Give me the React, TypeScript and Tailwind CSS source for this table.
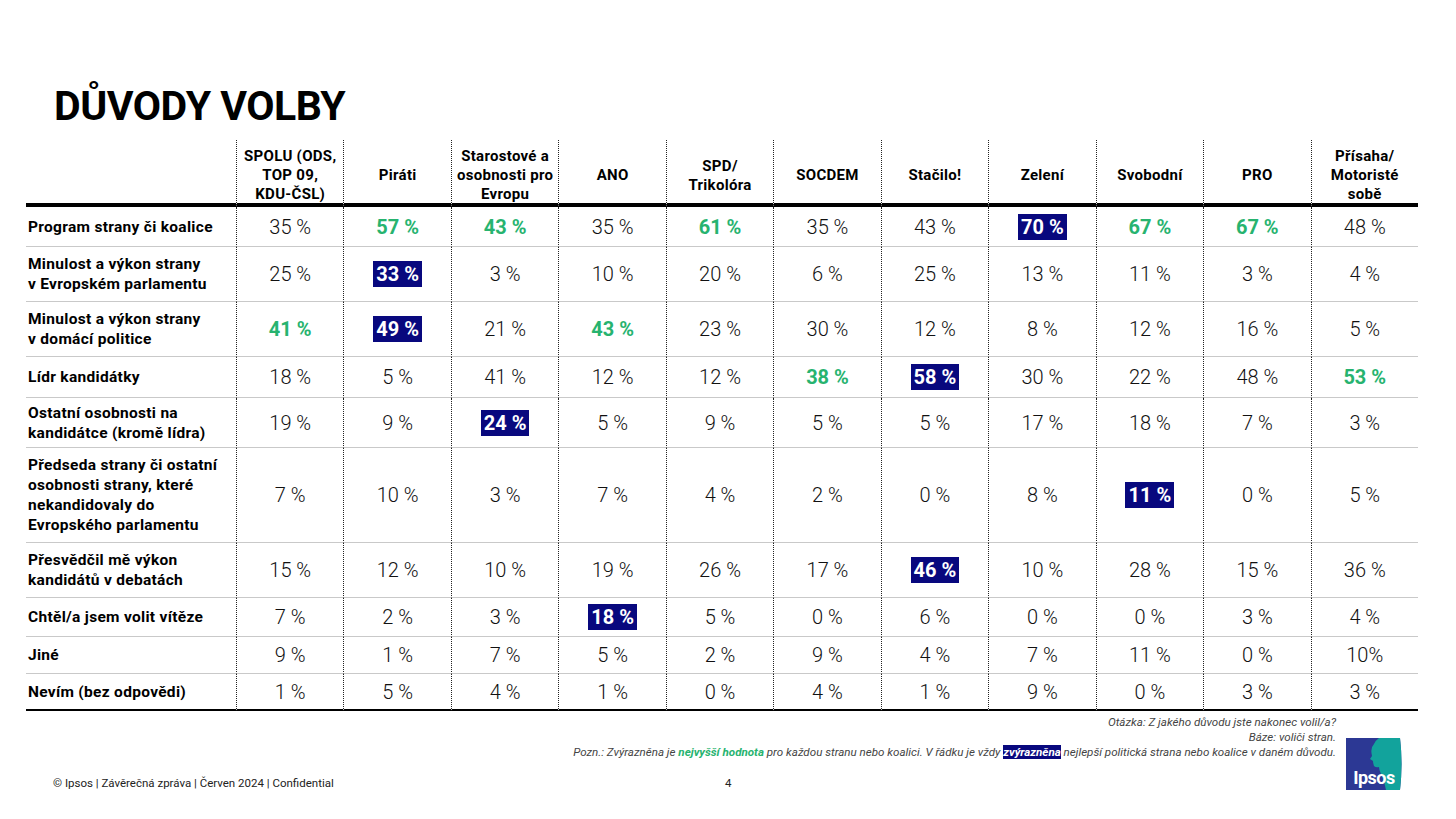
import React from 'react';

const font = { fontFamily: 'Roboto, "Noto Sans", sans-serif' };

const parties = [
  ['SPOLU (ODS,', 'TOP 09,', 'KDU-ČSL)'],
  ['Piráti'],
  ['Starostové a', 'osobnosti pro', 'Evropu'],
  ['ANO'],
  ['SPD/', 'Trikolóra'],
  ['SOCDEM'],
  ['Stačilo!'],
  ['Zelení'],
  ['Svobodní'],
  ['PRO'],
  ['Přísaha/', 'Motoristé', 'sobě'],
];

// g = nejvyšší hodnota pro stranu, b = nejlepší strana v řádku
const rows: { label: string[]; h: string; values: string[] }[] = [
  { label: ['Program strany či koalice'], h: 'h-[40px]', values: ['35 %', '57 %g', '43 %g', '35 %', '61 %g', '35 %', '43 %', '70 %b', '67 %g', '67 %g', '48 %'] },
  { label: ['Minulost a výkon strany', 'v Evropském parlamentu'], h: 'h-[55px]', values: ['25 %', '33 %b', '3 %', '10 %', '20 %', '6 %', '25 %', '13 %', '11 %', '3 %', '4 %'] },
  { label: ['Minulost a výkon strany', 'v domácí politice'], h: 'h-[55px]', values: ['41 %g', '49 %b', '21 %', '43 %g', '23 %', '30 %', '12 %', '8 %', '12 %', '16 %', '5 %'] },
  { label: ['Lídr kandidátky'], h: 'h-[41px]', values: ['18 %', '5 %', '41 %', '12 %', '12 %', '38 %g', '58 %b', '30 %', '22 %', '48 %', '53 %g'] },
  { label: ['Ostatní osobnosti na', 'kandidátce (kromě lídra)'], h: 'h-[50px]', values: ['19 %', '9 %', '24 %b', '5 %', '9 %', '5 %', '5 %', '17 %', '18 %', '7 %', '3 %'] },
  { label: ['Předseda strany či ostatní', 'osobnosti strany, které', 'nekandidovaly do', 'Evropského parlamentu'], h: 'h-[95px]', values: ['7 %', '10 %', '3 %', '7 %', '4 %', '2 %', '0 %', '8 %', '11 %b', '0 %', '5 %'] },
  { label: ['Přesvědčil mě výkon', 'kandidátů v debatách'], h: 'h-[55px]', values: ['15 %', '12 %', '10 %', '19 %', '26 %', '17 %', '46 %b', '10 %', '28 %', '15 %', '36 %'] },
  { label: ['Chtěl/a jsem volit vítěze'], h: 'h-[39px]', values: ['7 %', '2 %', '3 %', '18 %b', '5 %', '0 %', '6 %', '0 %', '0 %', '3 %', '4 %'] },
  { label: ['Jiné'], h: 'h-[37px]', values: ['9 %', '1 %', '7 %', '5 %', '2 %', '9 %', '4 %', '7 %', '11 %', '0 %', '10%'] },
  { label: ['Nevím (bez odpovědi)'], h: 'h-[37px]', values: ['1 %', '5 %', '4 %', '1 %', '0 %', '4 %', '1 %', '9 %', '0 %', '3 %', '3 %'] },
];

function Value({ v }: { v: string }) {
  const mark = v.slice(-1);
  if (mark === 'b') {
    return <span className="bg-[#08087e] px-[3px] text-[20px] font-bold leading-[26px] text-white">{v.slice(0, -1)}</span>;
  }
  if (mark === 'g') {
    return <span className="text-[20px] font-bold text-[#27b36f]">{v.slice(0, -1)}</span>;
  }
  return <span className="text-[20px] font-light text-[#111]">{v}</span>;
}

function IpsosLogo() {
  return (
    <svg width="56" height="52" viewBox="0 0 56 52">
      <path d="M0 0 H54 Q57 26 54 52 H0 Z" fill="#2c3894" />
      <path d="M33 0 H54 Q57 26 54 52 H40 Q38 42 35 36 Q33 32 33 29 Q30 30 28 28 Q27 25 27 23 L24 21 L26 18 Q24 10 28 6 Q30 2 33 0 Z" fill="#12a39c" />
      <text x="28" y="46" textAnchor="middle" fill="#fff" fontSize="18" fontWeight="700" fontFamily="Roboto, sans-serif" letterSpacing="-0.5">Ipsos</text>
    </svg>
  );
}

export default function App() {
  return (
    <div className="relative h-[819px] w-[1456px] overflow-hidden bg-white text-black" style={font}>
      <h1 className="ml-[54px] mt-[82px] h-[48px] text-[41px] font-bold leading-[48px] tracking-[-0.5px]">DŮVODY VOLBY</h1>

      <div className="ml-[26px] mt-[10px] grid w-[1392px] grid-cols-[210px_repeat(11,1fr)]">
        <div className="h-[67px] border-b-4 border-black" />
        {parties.map((p, i) => (
          <div
            key={i}
            className="flex h-[67px] flex-col items-center justify-center border-b-4 border-l border-dotted border-b-black border-l-[#222] pt-[8px] text-center text-[15px] font-bold leading-[19px] tracking-[0.3px]"
            style={{ borderBottomStyle: 'solid' }}
          >
            {p.map((line, j) => (
              <span key={j}>{line}</span>
            ))}
          </div>
        ))}

        {rows.map((r, ri) => {
          const last = ri === rows.length - 1;
          const bottom = last ? 'border-b-2 border-b-black' : 'border-b border-b-[#c9c9c9]';
          return (
            <React.Fragment key={ri}>
              <div className={`flex flex-col justify-center pl-[2px] text-[15.5px] font-bold leading-[20px] tracking-[0.3px] ${r.h} ${bottom}`}>
                {r.label.map((line, j) => (
                  <span key={j} className="whitespace-nowrap">{line}</span>
                ))}
              </div>
              {r.values.map((v, vi) => (
                <div
                  key={vi}
                  className={`flex items-center justify-center border-l border-l-[#222] ${r.h} ${bottom}`}
                  style={{ borderLeftStyle: 'dotted' }}
                >
                  <Value v={v} />
                </div>
              ))}
            </React.Fragment>
          );
        })}
      </div>

      <div className="mt-[4px] flex">
        <div className="flex-1 text-right text-[11.6px] italic leading-[15px] text-[#444]">
          <div>Otázka: Z jakého důvodu jste nakonec volil/a?</div>
          <div>Báze: voliči stran.</div>
          <div>
            Pozn.: Zvýrazněna je <span className="font-bold text-[#27b36f]">nejvyšší hodnota</span> pro každou stranu nebo koalici. V řádku je vždy{' '}
            <span className="bg-[#08087e] font-bold text-white">zvýrazněna</span> nejlepší politická strana nebo koalice v daném důvodu.
          </div>
        </div>
        <div className="-mb-[14px] ml-[10px] mr-[54px] mt-[23px] h-[52px] w-[56px]">
          <IpsosLogo />
        </div>
      </div>

      <div className="flex text-[11.5px] leading-[14px] text-[#222]">
        <span className="w-[725px] pl-[53px]">© Ipsos | Závěrečná zpráva | Červen 2024 | Confidential</span>
        <span>4</span>
      </div>
    </div>
  );
}
